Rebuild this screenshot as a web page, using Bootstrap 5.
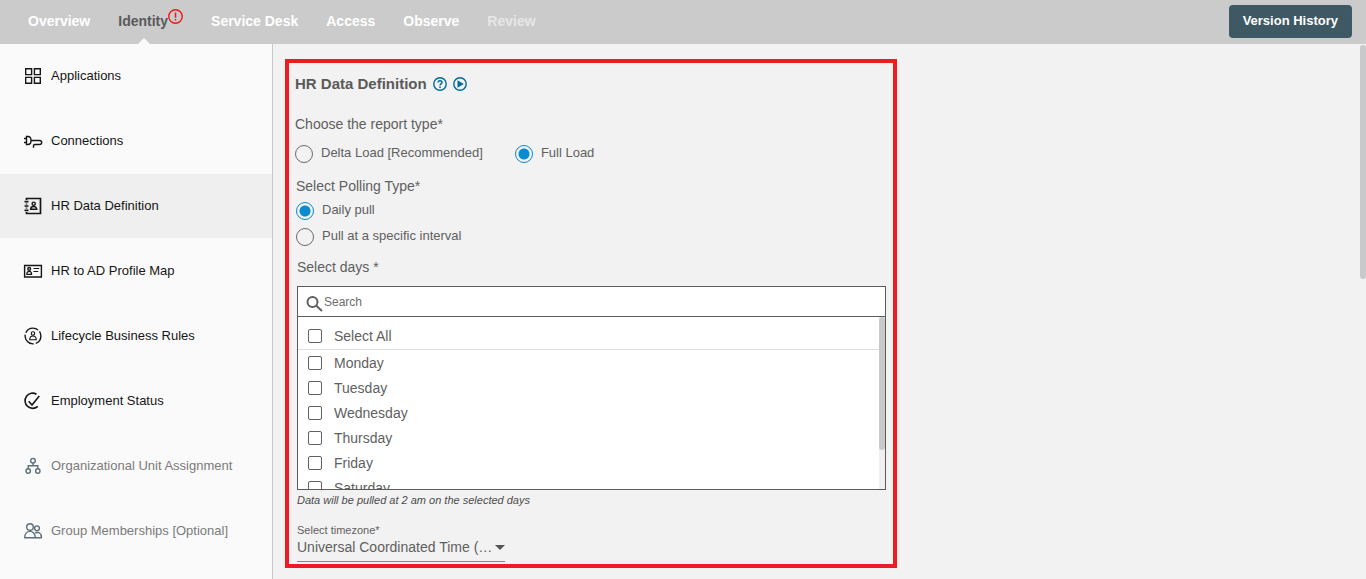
<!DOCTYPE html>
<html lang="en">
<head>
<meta charset="utf-8">
<meta name="viewport" content="width=device-width, initial-scale=1">
<title>HR Data Definition</title>
<link rel="stylesheet" href="https://cdn.jsdelivr.net/npm/bootstrap@5.3.0/dist/css/bootstrap.min.css">
<style>
  body { font-family: "Liberation Sans", Arial, sans-serif; font-size: 14px; line-height: 20px; color: #5f5f5f; background: #f2f2f2; }
  .topbar { height: 44px; padding: 0 14px 0 28px; background: #cbcbcb; }
  .topbar .nav { gap: 0 28px; }
  .topbar .nav-link { position: relative; display: flex; padding: 11px 0 13px; font-weight: 700; color: #fff; }
  .topbar .nav-link.active { color: #5a5a5a; }
  .topbar .nav-link.active::after { content: ""; position: absolute; left: 20px; bottom: 0; border: 6px solid transparent; border-top: 0; border-bottom-color: #fafafa; }
  .topbar .nav-link.disabled { color: #e6e6e6; }
  .alert-mark { width: 15px; height: 15px; margin-top: -2px; }
  .btn-history { margin-bottom: 2px; padding: 5px 14px 7px; font-size: 13px; line-height: 21px; font-weight: 700; color: #fff; background: #3e5963; border: 0; border-radius: 4px; }
  .btn-history:hover { color: #fff; background: #33494f; }
  .sidebar { width: 273px; background: #fafafa; border-right: 1px solid #c9c9c9; }
  .side-link { height: 64px; margin-bottom: 1px; padding-left: 23px; gap: 8px; font-size: 13px; color: #161616; text-decoration: none; }
  .side-link.current { background: #efefef; }
  .side-link.locked { color: #7b7b7b; }
  .side-link svg { width: 20px; height: 20px; fill: none; stroke: currentColor; stroke-width: 1.4; }
  .side-link.locked svg { color: #5d6f78; }
  .panel { width: 56%; min-width: 480px; margin: 15px 0 0 12px; padding: 11px 7px 2px 6px; border: 4px solid #ed1c24; }
  .panel h1 { font-size: 15px; line-height: 20px; font-weight: 700; color: #5a5a5a; }
  .heading-row { gap: 6px; }
  .help-btn { width: 14px; height: 14px; padding: 0; border: 0; background: none; color: #006a9b; display: flex; }
  .form-title { float: none; font-size: 14px; line-height: 20px; margin: 0; }
  .report { margin-top: 20px; }
  .report-row { gap: 32px; margin-top: 6px; }
  .polling { margin-top: 10px; padding-left: 1px; }
  .polling .form-title { margin-bottom: 1px; }
  .days { margin-top: 8px; padding-left: 2px; }
  .choice { display: flex; align-items: center; min-height: 26px; margin: 0; padding: 0; font-size: 13px; }
  .choice .form-check-input { float: none; width: 18px; height: 18px; margin: 1px 8px 0 0; background-color: transparent; border: 1px solid #6b6b6b; }
  .choice .form-check-input:checked { border-color: #0a8ad0; background-image: radial-gradient(circle, #0a8ad0 5px, transparent 6px); }
  .day-box { margin-top: 9px; background: #fff; border: 1px solid #5c5c5c; }
  .search-row { height: 30px; padding-left: 8px; border-bottom: 1px solid #5c5c5c; }
  .search-row input { flex: 1; border: 0; padding: 0; outline: 0; font-size: 12px; color: #5f5f5f; }
  .search-row input::placeholder { color: #6d6d6d; opacity: 1; }
  .search-row svg { margin-top: 2px; }
  .day-list { height: 172px; overflow-y: auto; scrollbar-width: none; margin-right: 6px; }
  .day-list::-webkit-scrollbar { display: none; }
  .day-row { display: flex; align-items: center; height: 25px; padding-left: 10px; }
  .day-row.all { height: 33px; padding-top: 5px; border-bottom: 1px solid #dedede; }
  .day-row .form-check-input { width: 14px; height: 14px; margin: 0 12px 0 0; border: 1px solid #616161; border-radius: 2px; }
  .thumb { position: absolute; right: 0; width: 6px; border-radius: 3px; background: #c8c9ca; }
  .track { position: absolute; right: 0; top: 30px; bottom: 0; width: 6px; background: #f0f0f0; }
  .track .thumb { top: 0; height: 133px; }
  .page-thumb { top: 1px; height: 234px; }
  .hint { font-size: 11px; line-height: 20px; font-style: italic; color: #4c4c4c; }
  .zone-label { font-size: 11px; line-height: 14px; margin-top: 13px; }
  .zone { width: 208px; height: 25px; padding: 0 10px 4px 0; border: 0; border-bottom: 1px solid #858585; border-radius: 0; font-size: 14px; line-height: 20px; color: #5f5f5f; background-color: transparent;
    background-image: url("data:image/svg+xml,%3Csvg xmlns='http://www.w3.org/2000/svg' viewBox='0 0 10 5'%3E%3Cpath fill='%23555' d='M0 0h10L5 5z'/%3E%3C/svg%3E"); background-size: 10px 5px; background-position: right 8px; }
</style>
</head>
<body class="vh-100 overflow-hidden d-flex flex-column">
<header class="topbar d-flex align-items-center justify-content-between flex-shrink-0">
  <nav class="nav">
    <a class="nav-link" href="#">Overview</a>
    <a class="nav-link active" href="#">Identity
      <svg class="alert-mark" viewBox="0 0 14 14" fill="none" stroke="#f01818"><circle cx="7" cy="7" r="6.3" stroke-width="1.3"/><path d="M7 3.3v4.8M7 9.3v1.4" stroke-width="1.4"/></svg></a>
    <a class="nav-link" href="#">Service Desk</a>
    <a class="nav-link" href="#">Access</a>
    <a class="nav-link" href="#">Observe</a>
    <a class="nav-link disabled" href="#">Review</a>
  </nav>
  <button type="button" class="btn btn-history">Version History</button>
</header>
<div class="d-flex flex-fill overflow-hidden">
  <aside class="sidebar flex-shrink-0">
    <a class="side-link d-flex align-items-center" href="#"><svg viewBox="0 0 20 20"><path d="M2.700 2.700h5.900v5.900H2.700zM11.400 2.700h5.900v5.900h-5.900zM2.700 11.400h5.900v5.900H2.700zM11.400 11.400h5.900v5.900h-5.900z"/></svg>Applications</a>
    <a class="side-link d-flex align-items-center" href="#"><svg viewBox="0 0 20 20"><path d="M3.500 5.500H5c2.200 0 3 1.600 3 4s-.8 4-3 4H3.500zM1 7.500h2.500M1 11.500h2.500M8 9.500h8.500c2.900 0 2.900 4 0 4h-4.800q-1.200 0-1.200 1.200v2" stroke-width="1.400"/></svg>Connections</a>
    <a class="side-link current d-flex align-items-center" href="#"><svg viewBox="0 0 20 20"><path d="M3.500 4V2.500h14v15h-14V16M3.500 7.500v1M3.500 11.500v1M1.500 5.700h4M1.500 10h4M1.500 14.300h4" stroke-width="1.700"/><circle cx="10.700" cy="7.700" r="1.600"/><path d="M7.600 13.300c0-3.700 6.200-3.700 6.200 0z"/></svg>HR Data Definition</a>
    <a class="side-link d-flex align-items-center" href="#"><svg viewBox="0 0 20 20"><path d="M1.600 4.500h16.800v11.500H1.600z"/><circle cx="6.200" cy="7.900" r="1.400"/><path d="M3.800 13.300c0-4 4.800-4 4.800 0zM10.500 7.500h5.700M10.500 10.500h4.700" stroke-width="1.200"/></svg>HR to AD Profile Map</a>
    <a class="side-link d-flex align-items-center" href="#"><svg viewBox="0 0 20 20"><circle cx="10" cy="10" r="7.900" stroke-dasharray="14.500 2" stroke-dashoffset="5"/><circle cx="10" cy="7.500" r="1.700" stroke-width="1.100"/><path d="M6.700 13.700c0-5 6.600-5 6.600 0z" stroke-width="1.100"/></svg>Lifecycle Business Rules</a>
    <a class="side-link d-flex align-items-center" href="#"><svg viewBox="0 0 20 20"><path d="M13.500 3.200A7.600 7.600 0 1 0 14.800 15.400M5.700 10.300l3.300 3.700L16.300 5" stroke-width="1.600"/></svg>Employment Status</a>
    <a class="side-link locked d-flex align-items-center" href="#"><svg viewBox="0 0 20 20"><circle cx="10" cy="4.700" r="2.300"/><circle cx="5.200" cy="15" r="2.200"/><circle cx="14.800" cy="15" r="2.200"/><path d="M10 7v2.700M5.200 12.700v-3h9.600v3"/></svg>Organizational Unit Assignment</a>
    <a class="side-link locked d-flex align-items-center" href="#"><svg viewBox="0 0 20 20" stroke-linejoin="round"><circle cx="7" cy="6" r="3.300"/><path d="M1.700 16.700c0-8.500 10.600-8.500 10.600 0z"/><circle cx="14" cy="7.300" r="2.400"/><path d="M12.300 16.700h6.100c0-5-2.700-6-6.500-4.800"/></svg>Group Memberships [Optional]</a>
  </aside>
  <main class="flex-fill position-relative">
    <form class="panel">
      <div class="heading-row d-flex align-items-center">
        <h1 class="mb-0">HR Data Definition</h1>
        <button type="button" class="help-btn" aria-label="Help"><svg viewBox="0 0 14 14" fill="none" stroke="currentColor"><circle cx="7" cy="7" r="6.200" stroke-width="1.400"/><path d="M5 5.500c.2-2.400 4-2.200 4 0C9 6.900 7 6.700 7 8.500M7 9.500V11" stroke-width="1.500"/></svg></button>
        <button type="button" class="help-btn" aria-label="Play tour"><svg viewBox="0 0 14 14" fill="none" stroke="currentColor"><circle cx="7" cy="7" r="6.200" stroke-width="1.400"/><path d="M4.500 3.300v7.400L10.800 7z" fill="currentColor" stroke="none"/></svg></button>
      </div>
      <fieldset class="report">
        <legend class="form-title">Choose the report type*</legend>
        <div class="report-row d-flex">
          <div class="choice form-check"><input class="form-check-input" type="radio" name="report" id="delta"><label for="delta">Delta Load [Recommended]</label></div>
          <div class="choice form-check"><input class="form-check-input" type="radio" name="report" id="full" checked><label for="full">Full Load</label></div>
        </div>
      </fieldset>
      <fieldset class="polling">
        <legend class="form-title">Select Polling Type*</legend>
        <div class="choice form-check"><input class="form-check-input" type="radio" name="polling" id="daily" checked><label for="daily">Daily pull</label></div>
        <div class="choice form-check"><input class="form-check-input" type="radio" name="polling" id="interval"><label for="interval">Pull at a specific interval</label></div>
      </fieldset>
      <fieldset class="days">
        <legend class="form-title">Select days *</legend>
        <div class="day-box position-relative">
          <div class="search-row d-flex align-items-center">
            <svg width="18" height="18" viewBox="0 0 18 18" fill="none" stroke="#5f5f5f" stroke-width="2"><circle cx="6.500" cy="8" r="5"/><path d="M10.300 11.800l5.700 5.200"/></svg>
            <input type="text" placeholder="Search" aria-label="Search days">
          </div>
          <div class="day-list">
            <div class="day-row all"><input class="form-check-input" type="checkbox" id="d0"><label for="d0">Select All</label></div>
            <div class="day-row"><input class="form-check-input" type="checkbox" id="d1"><label for="d1">Monday</label></div>
            <div class="day-row"><input class="form-check-input" type="checkbox" id="d2"><label for="d2">Tuesday</label></div>
            <div class="day-row"><input class="form-check-input" type="checkbox" id="d3"><label for="d3">Wednesday</label></div>
            <div class="day-row"><input class="form-check-input" type="checkbox" id="d4"><label for="d4">Thursday</label></div>
            <div class="day-row"><input class="form-check-input" type="checkbox" id="d5"><label for="d5">Friday</label></div>
            <div class="day-row"><input class="form-check-input" type="checkbox" id="d6"><label for="d6">Saturday</label></div>
          </div>
          <div class="track"><div class="thumb"></div></div>
        </div>
        <div class="hint">Data will be pulled at 2 am on the selected days</div>
        <label class="zone-label d-block" for="zone">Select timezone*</label>
        <select class="zone form-select" id="zone"><option>Universal Coordinated Time (…</option></select>
      </fieldset>
    </form>
    <div class="thumb page-thumb"></div>
  </main>
</div>
<script src="https://cdn.jsdelivr.net/npm/bootstrap@5.3.0/dist/js/bootstrap.bundle.min.js"></script>
</body>
</html>
